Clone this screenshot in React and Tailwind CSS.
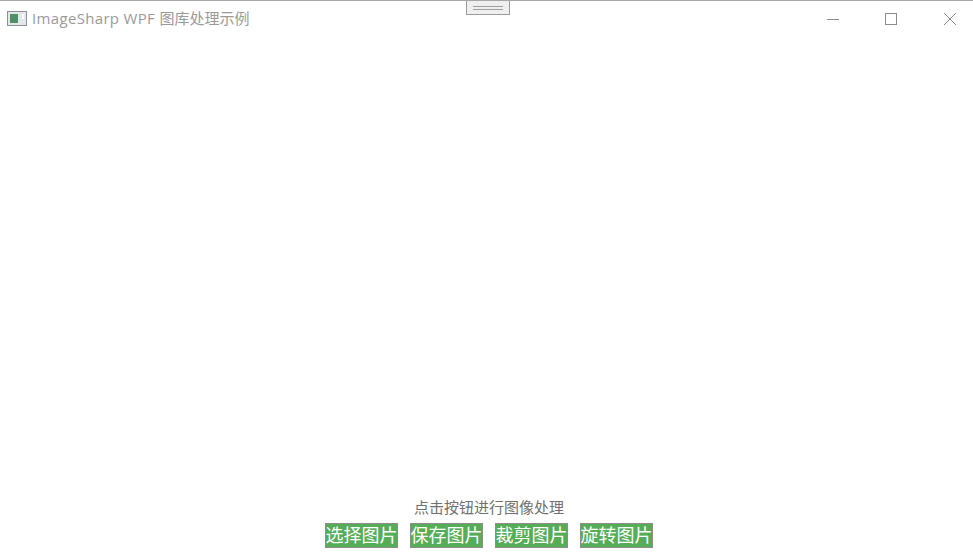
import React from 'react';

const buttons = ['选择图片', '保存图片', '裁剪图片', '旋转图片'];

const App = () => {
    return (
        <div className="relative flex flex-col h-[554px] w-[973px] overflow-hidden bg-white border-t border-[#a8a8a8] font-['Noto_Sans_CJK_SC','Noto_Sans',sans-serif]">
            {/* debug toolbar handle */}
            <div className="absolute left-[466px] top-[-1px] flex h-[15px] w-[44px] items-center justify-center border border-[#9a9a9a] bg-[#efefef]">
                <div className="h-[4px] w-[30px] border-y border-[#a0a0a0]"></div>
            </div>

            <div className="flex h-[35px] items-center pl-[7px]">
                <svg width="20" height="15" viewBox="0 0 20 15" className="mb-[1px]">
                    <rect x="0.5" y="0.5" width="19" height="14" fill="#e4e8e8" stroke="#8a9096" />
                    <rect x="3" y="3" width="8" height="9" fill="#4f9068" />
                    <rect x="15" y="3" width="2" height="5" fill="#ffffff" />
                </svg>
                <span className="ml-[5px] whitespace-nowrap text-[15px] leading-none text-[#9a9a9a] font-['Open_Sans','Noto_Sans_CJK_SC',sans-serif]">
                    <span className="tracking-[0.33px]">ImageSharp WPF </span>图库处理示例
                </span>
                <div className="ml-auto flex items-center text-[#8c8c8c]">
                    <svg width="14" height="14" viewBox="0 0 14 14" className="mr-[45px]">
                        <path d="M1 7.5H13" stroke="currentColor" fill="none" />
                    </svg>
                    <svg width="12" height="12" viewBox="0 0 12 12" className="mr-[46px]">
                        <rect x="0.5" y="0.5" width="11" height="11" stroke="currentColor" fill="none" />
                    </svg>
                    <svg width="14" height="14" viewBox="0 0 14 14" className="mr-[16px]">
                        <path d="M1 1L13 13M13 1L1 13" stroke="currentColor" fill="none" />
                    </svg>
                </div>
            </div>

            <div className="flex-1"></div>

            <div className="flex flex-col items-center pb-[6px] pl-[5px]">
                <p className="text-[15px] leading-[20px] text-[#707070]">点击按钮进行图像处理</p>
                <div className="mt-[6px] flex gap-[12px]">
                    {buttons.map((label) => (
                        <button key={label} className="flex h-[25px] w-[73px] items-center justify-center whitespace-nowrap border border-[#8d8d8d] bg-[#55ad58] pb-[3px] text-[18px] leading-none text-white">
                            {label}
                        </button>
                    ))}
                </div>
            </div>
        </div>
    );
};

export default App;
